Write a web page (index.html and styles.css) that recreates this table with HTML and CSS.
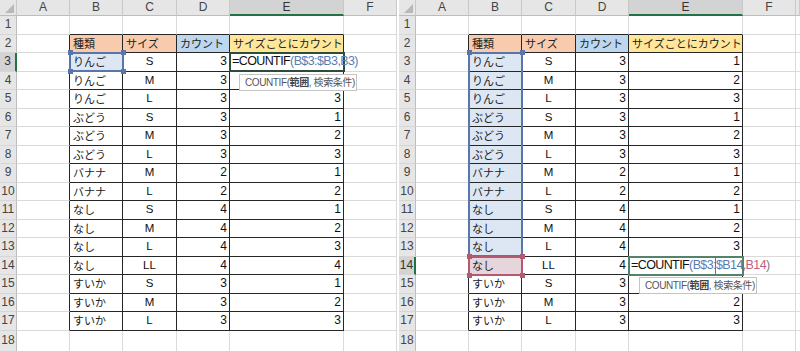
FILE: index.html
```html
<!DOCTYPE html>
<html lang="ja">
<head>
<meta charset="utf-8">
<title>COUNTIF</title>
<link rel="stylesheet" href="styles.css">
</head>
<body>
<div class="wrap">
  <div class="sheet left">
    <div class="row hdr"><div class="corner"></div><div class="ch">A</div><div class="ch">B</div><div class="ch">C</div><div class="ch">D</div><div class="ch on">E</div><div class="ch">F</div></div>
    <div class="row"><div class="rh">1</div><div class="c"></div><div class="c tb"></div><div class="c tb"></div><div class="c tb"></div><div class="c tb"></div><div class="c"></div></div>
    <div class="row"><div class="rh">2</div><div class="c tr"></div><div class="c t jp h1">種類</div><div class="c t jp h1">サイズ</div><div class="c t jp h2">カウント</div><div class="c t jp h3">サイズごとにカウント</div><div class="c"></div></div>
    <div class="row"><div class="rh on">3</div><div class="c tr"></div><div class="c t jp ref">りんご</div><div class="c t ctr">S</div><div class="c t r">3</div><div class="c t"><span class="fx">=COUNTIF<span class="rb">(B$3:$B3,B3)</span></span></div><div class="c"></div></div>
    <div class="row"><div class="rh">4</div><div class="c tr"></div><div class="c t jp">りんご</div><div class="c t ctr">M</div><div class="c t r">3</div><div class="c t r"></div><div class="c"></div></div>
    <div class="row"><div class="rh">5</div><div class="c tr"></div><div class="c t jp">りんご</div><div class="c t ctr">L</div><div class="c t r">3</div><div class="c t r">3</div><div class="c"></div></div>
    <div class="row"><div class="rh">6</div><div class="c tr"></div><div class="c t jp">ぶどう</div><div class="c t ctr">S</div><div class="c t r">3</div><div class="c t r">1</div><div class="c"></div></div>
    <div class="row"><div class="rh">7</div><div class="c tr"></div><div class="c t jp">ぶどう</div><div class="c t ctr">M</div><div class="c t r">3</div><div class="c t r">2</div><div class="c"></div></div>
    <div class="row"><div class="rh">8</div><div class="c tr"></div><div class="c t jp">ぶどう</div><div class="c t ctr">L</div><div class="c t r">3</div><div class="c t r">3</div><div class="c"></div></div>
    <div class="row"><div class="rh">9</div><div class="c tr"></div><div class="c t jp">バナナ</div><div class="c t ctr">M</div><div class="c t r">2</div><div class="c t r">1</div><div class="c"></div></div>
    <div class="row"><div class="rh">10</div><div class="c tr"></div><div class="c t jp">バナナ</div><div class="c t ctr">L</div><div class="c t r">2</div><div class="c t r">2</div><div class="c"></div></div>
    <div class="row"><div class="rh">11</div><div class="c tr"></div><div class="c t jp">なし</div><div class="c t ctr">S</div><div class="c t r">4</div><div class="c t r">1</div><div class="c"></div></div>
    <div class="row"><div class="rh">12</div><div class="c tr"></div><div class="c t jp">なし</div><div class="c t ctr">M</div><div class="c t r">4</div><div class="c t r">2</div><div class="c"></div></div>
    <div class="row"><div class="rh">13</div><div class="c tr"></div><div class="c t jp">なし</div><div class="c t ctr">L</div><div class="c t r">4</div><div class="c t r">3</div><div class="c"></div></div>
    <div class="row"><div class="rh">14</div><div class="c tr"></div><div class="c t jp">なし</div><div class="c t ctr">LL</div><div class="c t r">4</div><div class="c t r">4</div><div class="c"></div></div>
    <div class="row"><div class="rh">15</div><div class="c tr"></div><div class="c t jp">すいか</div><div class="c t ctr">S</div><div class="c t r">3</div><div class="c t r">1</div><div class="c"></div></div>
    <div class="row"><div class="rh">16</div><div class="c tr"></div><div class="c t jp">すいか</div><div class="c t ctr">M</div><div class="c t r">3</div><div class="c t r">2</div><div class="c"></div></div>
    <div class="row"><div class="rh">17</div><div class="c tr"></div><div class="c t jp">すいか</div><div class="c t ctr">L</div><div class="c t r">3</div><div class="c t r">3</div><div class="c"></div></div>
    <div class="row last"><div class="rh">18</div><div class="c"></div><div class="c"></div><div class="c"></div><div class="c"></div><div class="c"></div><div class="c"></div></div>

    <div class="box blue l-b3"><i class="hd tl"></i><i class="hd trh"></i><i class="hd bl"></i><i class="hd br"></i></div>
    <div class="edit l-e3"></div>
    <div class="tip l-tip">COUNTIF(<b>範囲</b>, 検索条件)</div>
  </div>

  <div class="sheet right">
    <div class="row hdr"><div class="corner"></div><div class="ch">A</div><div class="ch">B</div><div class="ch">C</div><div class="ch">D</div><div class="ch on">E</div><div class="ch">F</div><div class="ch"></div></div>
    <div class="row"><div class="rh">1</div><div class="c"></div><div class="c tb"></div><div class="c tb"></div><div class="c tb"></div><div class="c tb"></div><div class="c"></div><div class="c"></div></div>
    <div class="row"><div class="rh">2</div><div class="c tr"></div><div class="c t jp h1">種類</div><div class="c t jp h1">サイズ</div><div class="c t jp h2">カウント</div><div class="c t jp h3">サイズごとにカウント</div><div class="c"></div><div class="c"></div></div>
    <div class="row"><div class="rh">3</div><div class="c tr"></div><div class="c t jp ref">りんご</div><div class="c t ctr">S</div><div class="c t r">3</div><div class="c t r">1</div><div class="c"></div><div class="c"></div></div>
    <div class="row"><div class="rh">4</div><div class="c tr"></div><div class="c t jp ref">りんご</div><div class="c t ctr">M</div><div class="c t r">3</div><div class="c t r">2</div><div class="c"></div><div class="c"></div></div>
    <div class="row"><div class="rh">5</div><div class="c tr"></div><div class="c t jp ref">りんご</div><div class="c t ctr">L</div><div class="c t r">3</div><div class="c t r">3</div><div class="c"></div><div class="c"></div></div>
    <div class="row"><div class="rh">6</div><div class="c tr"></div><div class="c t jp ref">ぶどう</div><div class="c t ctr">S</div><div class="c t r">3</div><div class="c t r">1</div><div class="c"></div><div class="c"></div></div>
    <div class="row"><div class="rh">7</div><div class="c tr"></div><div class="c t jp ref">ぶどう</div><div class="c t ctr">M</div><div class="c t r">3</div><div class="c t r">2</div><div class="c"></div><div class="c"></div></div>
    <div class="row"><div class="rh">8</div><div class="c tr"></div><div class="c t jp ref">ぶどう</div><div class="c t ctr">L</div><div class="c t r">3</div><div class="c t r">3</div><div class="c"></div><div class="c"></div></div>
    <div class="row"><div class="rh">9</div><div class="c tr"></div><div class="c t jp ref">バナナ</div><div class="c t ctr">M</div><div class="c t r">2</div><div class="c t r">1</div><div class="c"></div><div class="c"></div></div>
    <div class="row"><div class="rh">10</div><div class="c tr"></div><div class="c t jp ref">バナナ</div><div class="c t ctr">L</div><div class="c t r">2</div><div class="c t r">2</div><div class="c"></div><div class="c"></div></div>
    <div class="row"><div class="rh">11</div><div class="c tr"></div><div class="c t jp ref">なし</div><div class="c t ctr">S</div><div class="c t r">4</div><div class="c t r">1</div><div class="c"></div><div class="c"></div></div>
    <div class="row"><div class="rh">12</div><div class="c tr"></div><div class="c t jp ref">なし</div><div class="c t ctr">M</div><div class="c t r">4</div><div class="c t r">2</div><div class="c"></div><div class="c"></div></div>
    <div class="row"><div class="rh">13</div><div class="c tr"></div><div class="c t jp ref">なし</div><div class="c t ctr">L</div><div class="c t r">4</div><div class="c t r">3</div><div class="c"></div><div class="c"></div></div>
    <div class="row"><div class="rh on">14</div><div class="c tr"></div><div class="c t jp ref2">なし</div><div class="c t ctr">LL</div><div class="c t r">4</div><div class="c t"><span class="fx">=COUNTIF<span class="rb">(B$3:$B14</span><span class="pn">,</span><span class="rr">B14</span><span class="pn">)</span></span></div><div class="c"></div><div class="c"></div></div>
    <div class="row"><div class="rh">15</div><div class="c tr"></div><div class="c t jp">すいか</div><div class="c t ctr">S</div><div class="c t r">3</div><div class="c t r"></div><div class="c"></div><div class="c"></div></div>
    <div class="row"><div class="rh">16</div><div class="c tr"></div><div class="c t jp">すいか</div><div class="c t ctr">M</div><div class="c t r">3</div><div class="c t r">2</div><div class="c"></div><div class="c"></div></div>
    <div class="row"><div class="rh">17</div><div class="c tr"></div><div class="c t jp">すいか</div><div class="c t ctr">L</div><div class="c t r">3</div><div class="c t r">3</div><div class="c"></div><div class="c"></div></div>
    <div class="row last"><div class="rh">18</div><div class="c"></div><div class="c"></div><div class="c"></div><div class="c"></div><div class="c"></div><div class="c"></div><div class="c"></div></div>

    <div class="box blue r-b3"><i class="hd tl"></i><i class="hd trh"></i><i class="hd bl"></i><i class="hd br"></i></div>
    <div class="box red r-b14"><i class="hd tl"></i><i class="hd trh"></i><i class="hd bl"></i><i class="hd br"></i></div>
    <div class="edit r-e14"></div>
    <div class="caret"></div>
    <div class="tip r-tip">COUNTIF(<b>範囲</b>, 検索条件)</div>
  </div>
</div>
</body>
</html>
```

FILE: styles.css
```css
* { box-sizing: border-box; }
html, body { margin: 0; padding: 0; background: #fff; }
body {
  font-family: "Liberation Sans", "Noto Sans CJK JP", sans-serif;
  color: #111;
}
.wrap {
  display: flex;
  gap: 2px;
  width: 800px;
  height: 351px;
  overflow: hidden;
}
.sheet { position: relative; flex: 0 0 auto; overflow: hidden; height: 351px; }
.left { width: 397px; }
.right { width: 401px; }

.row {
  display: grid;
  grid-template-columns: 17px 53px 53px 54px 53px 114px 53px 1fr;
  height: 18.5px;
}
.row.hdr { height: 16px; }
.row.last { height: 21px; }

.corner, .ch, .rh {
  background: #e6e6e6;
  color: #444;
  font-size: 12px;
  text-align: center;
  border-right: 1px solid #c9c9c9;
  border-bottom: 1px solid #c9c9c9;
}
.corner { position: relative; border-bottom-color: #bdbdbd; }
.corner::after {
  content: "";
  position: absolute;
  right: 2px;
  bottom: 2px;
  border-style: solid;
  border-width: 0 0 9px 9px;
  border-color: transparent transparent #b9b9b9 transparent;
}
.ch { line-height: 15px; border-bottom-color: #bdbdbd; }
.ch.on {
  background: #d3d3d3;
  border-bottom: 2px solid #217346;
  line-height: 14px;
  color: #333;
}
.rh { line-height: 17.5px; border-bottom-color: #d6d6d6; border-right-color: #bdbdbd; }
.last .rh { line-height: 18px; }
.rh.on {
  background: #d3d3d3;
  border-right: 2px solid #217346;
  color: #333;
}

.c {
  border-right: 1px solid #dadada;
  border-bottom: 1px solid #dadada;
  font-size: 12px;
  line-height: 17.5px;
  padding: 0 3px;
  white-space: nowrap;
  color: #111;
}
.t { border-right-color: #262626; border-bottom-color: #262626; }
.tr { border-right-color: #262626; }
.tb { border-bottom-color: #262626; }

.jp { font-size: 11px; font-family: "Noto Sans CJK JP", sans-serif; color: #222; }
.ctr { text-align: center; font-size: 11.5px; }
.r { text-align: right; padding-right: 2px; }

.h1 { background: #f8cbad; }
.h2 { background: #bdd7ee; }
.h3 { background: #ffe699; }
.ref { background: #dde7f4; }
.ref2 { background: #e7d5dc; }

.fx {
  position: relative;
  z-index: 2;
  font-size: 12.5px;
  letter-spacing: -0.6px;
  color: #111;
  margin-left: -1px;
}
.rb { color: #5b7cb2; }
.rr { color: #c0607e; }
.pn { color: #7a7a7a; }

.box { position: absolute; z-index: 3; border: 2px solid #5876aa; }
.box.red { border-color: #b25a72; }
.hd {
  position: absolute;
  width: 5px;
  height: 5px;
  background: #5876aa;
}
.red .hd { background: #b25a72; }
.hd.tl { left: -3.5px; top: -3.5px; }
.hd.trh { right: -3.5px; top: -3.5px; }
.hd.bl { left: -3.5px; bottom: -3.5px; }
.hd.br { right: -3.5px; bottom: -3.5px; }

.l-b3 { left: 69px; top: 51.5px; width: 55px; height: 20.5px; }
.r-b3 { left: 69px; top: 51.5px; width: 55px; height: 205.5px; }
.r-b14 { left: 69px; top: 255.5px; width: 55px; height: 20.5px; }

.edit {
  position: absolute;
  z-index: 1;
  border: 2px solid #55826a;
}
.l-e3 { left: 229px; top: 51.5px; width: 116px; height: 20.5px; border-color: #2d4d3a; }
.r-e14 { left: 229px; top: 255.5px; width: 116px; height: 20.5px; }

.caret {
  position: absolute;
  z-index: 3;
  left: 316px;
  top: 257px;
  width: 1px;
  height: 17px;
  background: #5d7f6c;
}

.tip {
  position: absolute;
  z-index: 4;
  height: 17px;
  width: 118px;
  background: #fff;
  border: 1px solid #c4c4c4;
  font-size: 10px;
  line-height: 15px;
  letter-spacing: -0.4px;
  color: #555;
  padding: 0 0 0 5px;
  white-space: nowrap;
}
.tip b { font-weight: bold; color: #444; }
.l-tip { left: 239px; top: 74px; }
.r-tip { left: 240px; top: 277px; }
```
